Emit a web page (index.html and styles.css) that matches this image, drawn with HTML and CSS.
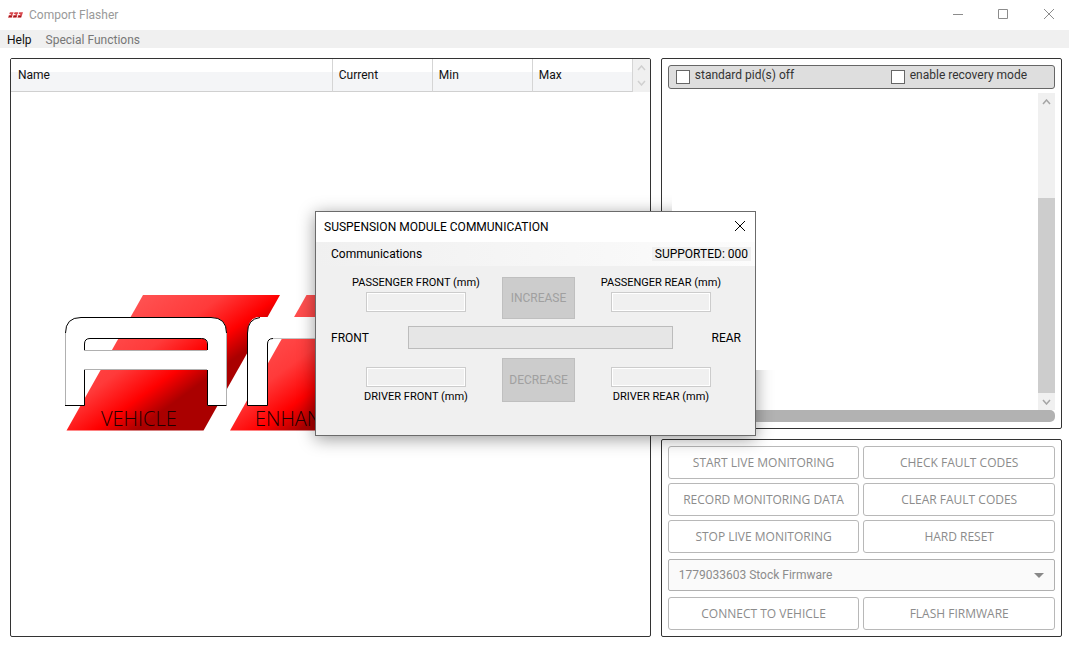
FILE: index.html
```html
<!DOCTYPE html>
<html lang="en">
<head>
<meta charset="utf-8">
<title>Comport Flasher</title>
<link rel="stylesheet" href="styles.css">
</head>
<body>
<header class="titlebar">
  <svg class="app-icon" viewBox="0 0 16 6" aria-hidden="true">
    <path d="M2 0h4L4 6H0zM7 0h4L9 6H5zM12 0h4l-2 6h-4z" fill="#d8474d"/>
    <path d="M0 2.500h3M5 2.500h3M10 2.500h3" stroke="#fff" stroke-width="1"/>
    <path d="M1 4.500h3M6 4.500h3M11 4.500h3" stroke="#8a1515" stroke-width="1"/>
  </svg>
  <span class="app-title">Comport Flasher</span>
  <div class="window-controls">
    <button aria-label="Minimize"><svg viewBox="0 0 12 12"><path d="M1 5.500h10"/></svg></button>
    <button aria-label="Maximize"><svg viewBox="0 0 12 12"><path d="M1.500 .5h9v9h-9z"/></svg></button>
    <button aria-label="Close"><svg viewBox="0 0 12 12"><path d="M1 0l10 10M11 0L1 10"/></svg></button>
  </div>
</header>
<nav class="menubar">
  <button class="active">Help</button>
  <button>Special Functions</button>
</nav>
<main class="workspace">
  <section class="panel monitor">
    <div class="monitor-head">
      <table>
        <thead><tr><th>Name</th><th class="value">Current</th><th class="value">Min</th><th class="value">Max</th></tr></thead>
      </table>
      <div class="scroll-stub">
        <svg viewBox="0 0 9 6"><path d="M1 5l3.500-4L8 5"/></svg>
        <svg viewBox="0 0 9 6"><path d="M1 1l3.500 4L8 1"/></svg>
      </div>
    </div>
    <svg class="logo" viewBox="64 294 336 140" role="img" aria-label="Vehicle enhancement logo">
      <defs>
        <linearGradient id="red" gradientUnits="userSpaceOnUse" x1="143" y1="295" x2="205" y2="380">
          <stop offset="0" stop-color="#ff5252"/>
          <stop offset=".45" stop-color="#ff3a3a"/>
          <stop offset=".77" stop-color="#ff0000"/>
          <stop offset="1" stop-color="#aa0000"/>
        </linearGradient>
      </defs>
      <path id="slab" d="M143 295H280L203.500 430.500H66.500z" fill="url(#red)"/>
      <use href="#slab" x="163.500"/>
      <path fill="#fff" fill-rule="evenodd" d="M65.500 405.500V333Q65.500 317.500 81 317.500H211Q226.500 317.500 226.500 333V405.500H207V369.500H84V405.500zM84 350V344Q84 338.500 89.500 338.500H201.500Q207 338.500 207 344V350z"/>
      <path fill="none" stroke="#b0b0b0" d="M65.500 405V333M226.500 333V405M84 350.500H207M84 369.500H207"/>
      <path fill="none" stroke="#000" d="M65.500 333Q65.500 317.500 81 317.500H211Q226.500 317.500 226.500 333M65 405.500H84.500V370M226.500 405.500H207.500V370M84.500 350V344Q84.500 338.500 90 338.500H201.500Q207.500 338.500 207.500 344V350"/>
      <path fill="#fff" d="M247.500 405.500V333Q248 317 260 317H400V338H273Q267.500 338 267.500 344V405.500z"/>
      <path fill="none" stroke="#c4c4c4" d="M272 338.500H400"/>
      <path fill="none" stroke="#000" d="M260 317.500Q247.500 319 247.500 333V405.500H267.500V344Q267.500 338.500 273 338.500"/>
      <text x="101" y="426">VEHICLE</text>
      <text x="255" y="426">ENHAN</text>
    </svg>
  </section>
  <div class="side">
    <section class="panel log">
      <div class="options">
        <label><input type="checkbox"><span>standard pid(s) off</span></label>
        <label><input type="checkbox"><span>enable recovery mode</span></label>
      </div>
      <div class="log-view">
        <div class="log-page"></div>
        <div class="scrollbar">
          <svg viewBox="0 0 9 6"><path d="M1 5l3.500-4L8 5"/></svg>
          <div class="track"><div class="thumb"></div></div>
          <svg viewBox="0 0 9 6"><path d="M1 1l3.500 4L8 1"/></svg>
        </div>
      </div>
      <div class="progress-line"></div>
    </section>
    <section class="panel actions">
      <div class="button-grid">
        <button disabled>START LIVE MONITORING</button>
        <button disabled>CHECK FAULT CODES</button>
        <button disabled>RECORD MONITORING DATA</button>
        <button disabled>CLEAR FAULT CODES</button>
        <button disabled>STOP LIVE MONITORING</button>
        <button disabled>HARD RESET</button>
      </div>
      <div class="firmware">
        <select aria-label="Firmware" disabled><option>1779033603 Stock Firmware</option></select>
        <svg viewBox="0 0 10 5"><path d="M0 0h10L5 5z"/></svg>
      </div>
      <div class="button-grid">
        <button disabled>CONNECT TO VEHICLE</button>
        <button disabled>FLASH FIRMWARE</button>
      </div>
    </section>
  </div>
</main>
<div class="dialog-shadow"></div>
<div class="dialog" role="dialog" aria-labelledby="dialog-title">
  <div class="dialog-title">
    <span id="dialog-title">SUSPENSION MODULE COMMUNICATION</span>
    <button aria-label="Close dialog"><svg viewBox="0 0 12 12"><path d="M1 0l10 10M11 0L1 10"/></svg></button>
  </div>
  <div class="dialog-menu">
    <button>Communications</button>
    <span class="supported">SUPPORTED: 000</span>
  </div>
  <div class="dialog-body">
    <div class="axle">
      <div class="field"><label for="pf">PASSENGER FRONT (mm)</label><input id="pf" type="text" disabled></div>
      <button disabled>INCREASE</button>
      <div class="field"><label for="pr">PASSENGER REAR (mm)</label><input id="pr" type="text" disabled></div>
    </div>
    <div class="balance"><span>FRONT</span><div class="bar"></div><span>REAR</span></div>
    <div class="axle lower">
      <div class="field"><input id="df" type="text" disabled><label for="df">DRIVER FRONT (mm)</label></div>
      <button disabled>DECREASE</button>
      <div class="field"><input id="dr" type="text" disabled><label for="dr">DRIVER REAR (mm)</label></div>
    </div>
  </div>
</div>
</body>
</html>
```
FILE: styles.css
```css
* { box-sizing: border-box; }
body {
  margin: 0;
  height: 100vh;
  display: flex;
  flex-direction: column;
  background: #fff;
  color: #111;
  font: 12px/16px Roboto, "Open Sans", sans-serif;
  overflow: hidden;
}
button, input, select { font: inherit; color: inherit; margin: 0; }
button { border: 0; padding: 0; background: none; }
svg { display: block; }

.titlebar { display: flex; align-items: center; height: 30px; padding-left: 8px; }
.app-icon { width: 15px; height: 6px; margin-right: 6px; }
.app-title { color: #999; }
.window-controls { display: flex; margin-left: auto; }
.window-controls button { width: 45px; height: 30px; display: grid; place-items: center; }
.window-controls svg, .dialog-title svg { width: 12px; height: 12px; fill: none; stroke: #8c8c8c; }
.window-controls button:last-child { width: 44px; padding-left: 3px; }

.menubar { display: flex; gap: 14px; height: 18px; padding-left: 7px; background: #f0f0f0; color: #777; }
.menubar .active { color: #111; }
.menubar button { line-height: 18px; padding-top: 1px; }

.workspace { flex: 1; display: flex; gap: 10px; padding: 10px 7px 8px 10px; min-height: 0; }
.panel { border: 1px solid #333; border-radius: 2px; }
.monitor { flex: 640 1 0; min-width: 0; overflow: hidden; }
.side { flex: 402 1 0; min-width: 0; display: flex; flex-direction: column; gap: 10px; }

.monitor-head { display: flex; height: 33px; }
.monitor-head table { flex: 1; table-layout: fixed; border-collapse: separate; border-spacing: 0; width: 100%; }
.monitor-head th {
  height: 33px;
  padding: 0 6px;
  font-weight: 400;
  text-align: left;
  border-right: 1px solid #d5d5d5;
  border-bottom: 1px solid #d0d0d0;
  background: linear-gradient(#fff 13px, #f4f5f7 13px);
}
.monitor-head th:first-child { padding-left: 7px; }
.monitor-head .value { width: 100px; }
.scroll-stub { width: 17px; padding: 6px 0; background: #f0f0f0; display: flex; flex-direction: column; justify-content: space-between; align-items: center; }
.scroll-stub svg, .scrollbar svg { width: 9px; height: 6px; fill: none; stroke: #a5a5a5; stroke-width: 1.500; }
.scroll-stub svg { stroke: #d0d0d0; }
.logo { width: 336px; height: 140px; margin: 202px 0 0 53px; }
.logo text { font: 300 20px "Open Sans", Lato, sans-serif; fill: #200; }

.log { flex: 1; display: flex; flex-direction: column; padding: 6px; min-height: 0; }
.options {
  display: grid;
  grid-template-columns: 216fr 157fr;
  height: 24px;
  padding: 0 7px;
  border: 1px solid #666;
  border-radius: 3px;
  background: #dedede;
  color: #333;
}
.options label { display: flex; gap: 5px; align-items: center; }
.options span { padding-bottom: 4px; }
.options input { appearance: none; width: 14px; height: 14px; border: 1px solid #666; background: #fff; }
.log-view { flex: 1; display: flex; margin-top: 4px; min-height: 0; }
.log-page { flex: 1; height: 277px; margin-left: 4px; background: #fff; position: relative; z-index: 2; }
.scrollbar { width: 17px; padding: 6px 0 5px; display: flex; flex-direction: column; align-items: center; gap: 6px; background: #f0f0f0; }
.track { flex: 1; width: 100%; display: flex; flex-direction: column; justify-content: flex-end; }
.thumb { height: 69%; background: #cdcdcd; }
.progress-line { height: 12px; border-radius: 5px; background: #b2b2b2; }

.actions { padding: 6px; display: flex; flex-direction: column; gap: 6px; color: #8c8c8c; }
.button-grid { display: grid; grid-template-columns: 1fr 1fr; gap: 4px; }
.button-grid button { height: 33px; border: 1px solid #b8b8b8; border-radius: 3px; background: #fff; font-family: "Open Sans", sans-serif; }
.firmware { display: grid; align-items: center; }
.firmware > * { grid-area: 1 / 1; }
.firmware select { appearance: none; width: 100%; height: 32px; padding: 0 10px; border: 1px solid #b0b0b0; border-radius: 2px; background: #fafafa; opacity: 1; }
.firmware svg { justify-self: end; width: 10px; height: 5px; margin-right: 11px; fill: #888; pointer-events: none; }
.actions button, .actions select { color: #8c8c8c; }

.dialog, .dialog-shadow { position: absolute; left: 315px; top: 211px; width: 441px; height: 225px; }
.dialog-shadow { z-index: 1; box-shadow: 0 3px 16px rgba(0, 0, 0, .4); }
.dialog { z-index: 3; border: 1px solid #6b6b6b; background: #f0f0f0; color: #000; }
.dialog-title { display: flex; align-items: center; justify-content: space-between; height: 30px; padding: 0 9px 0 8px; background: #fff; }
.dialog-title svg { stroke: #000; }
.dialog-menu { display: flex; align-items: center; justify-content: space-between; height: 24px; padding: 0 4px 0 15px; background: linear-gradient(90deg, #f0f0f0, #fcfcfc); }
.supported { padding: 1px 3px 0; line-height: 13px; background: #f0f0f0; }
.dialog-body { display: flex; flex-direction: column; gap: 7px; padding-top: 10px; }
.axle { display: flex; gap: 20px; padding-left: 34px; height: 43px; align-items: flex-start; }
.axle button { width: 73px; height: 42px; margin-top: 1px; border: 1px solid #bfbfbf; background: #ccc; color: #a0a0a0; }
.field { width: 132px; display: flex; flex-direction: column; align-items: center; gap: 2px; font-size: 11px; line-height: 14px; white-space: nowrap; }
.field input { width: 100px; height: 20px; padding: 0; border: 1px solid #ccc; border-radius: 0; background: #f0f0f0; box-shadow: inset 0 0 0 1px #fff; }
.balance { display: flex; align-items: center; justify-content: space-between; height: 23px; padding: 0 14px 0 15px; }
.bar { width: 265px; height: 23px; border: 1px solid #bcbcbc; background: #e6e6e6; }
.lower { height: 46px; align-items: flex-end; margin-top: 2px; }
.lower .field { gap: 3px; }
.lower button { height: 44px; margin: 0; align-self: flex-start; }
```
